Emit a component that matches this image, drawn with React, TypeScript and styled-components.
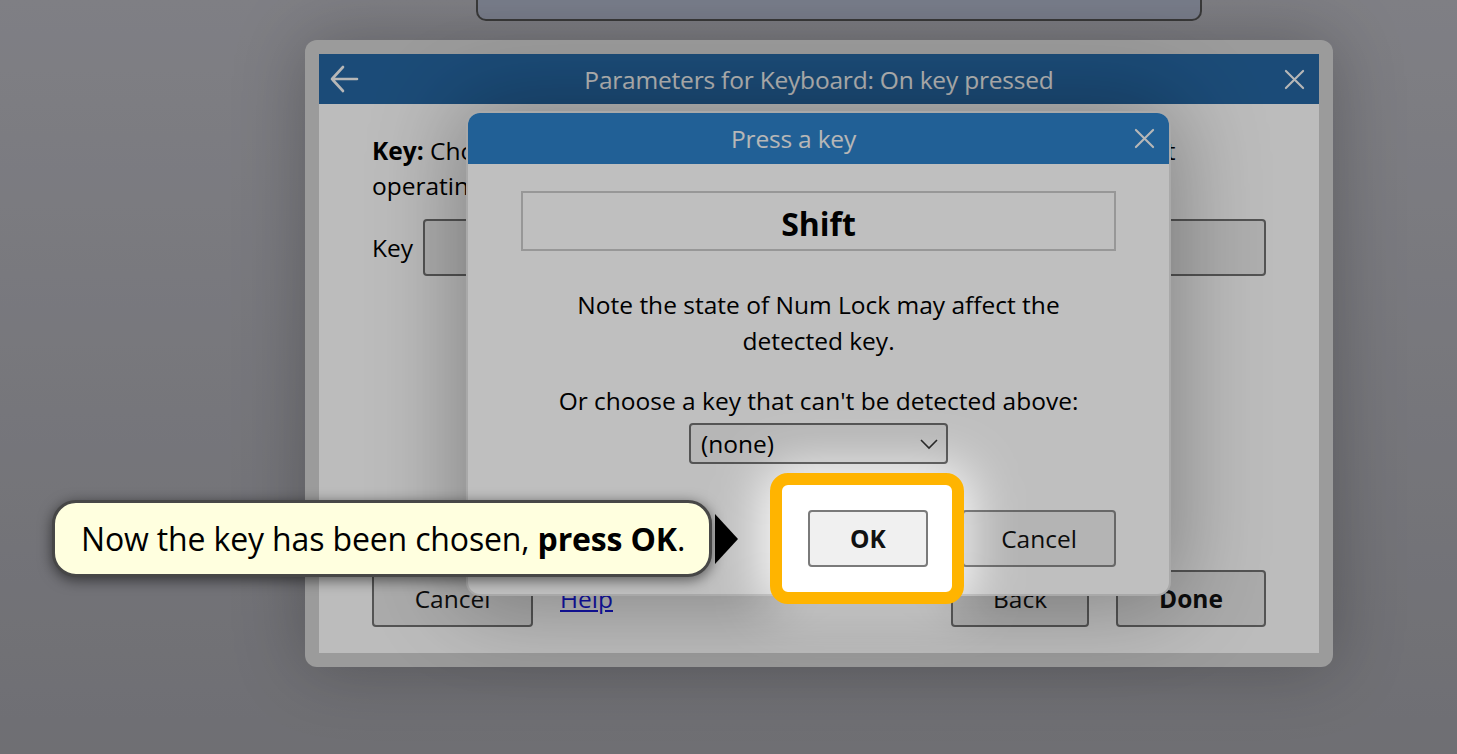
import styled, { createGlobalStyle } from "styled-components";

const GlobalStyle = createGlobalStyle`
  html, body {
    margin: 0;
    padding: 0;
  }
  body {
    font-family: "Open Sans", "Liberation Sans", sans-serif;
    color: #000;
    overflow: hidden;
  }
`;

const Page = styled.div`
  position: relative;
  width: 1457px;
  height: 754px;
  overflow: hidden;
  background: linear-gradient(180deg, #aaaab1 0%, #94949a 100%);
`;

const TopPanel = styled.div`
  margin-left: 476px;
  width: 722px;
  height: 19px;
  background: #a3a9bb;
  border: 2px solid #4e4e4e;
  border-top: none;
  border-radius: 0 0 10px 10px;
`;

// outer "Parameters" modal
const OuterDialog = styled.div`
  position: absolute;
  left: 305px;
  top: 40px;
  width: 1028px;
  height: 627px;
  box-sizing: border-box;
  padding: 14px;
  display: flex;
  flex-direction: column;
  background: #cfcfcf;
  border-radius: 12px;
  box-shadow: 0 0 70px rgba(0, 0, 0, 0.25);
`;

const Header = styled.div<{ $tone: string; $h: number }>`
  display: flex;
  align-items: center;
  height: ${(p) => p.$h}px;
  flex-shrink: 0;
  background: ${(p) => p.$tone};
  color: #f4f4f4;
`;

const HeaderTitle = styled.div`
  flex: 1;
  text-align: center;
  font-size: 24.5px;
  letter-spacing: -0.2px;
`;

const IconButton = styled.div`
  width: 50px;
  height: 100%;
  display: flex;
  align-items: center;
  justify-content: center;
`;

const OuterBody = styled.div`
  flex: 1;
  display: flex;
  flex-direction: column;
  padding: 29px 53px 26px;
  background: #fbfbfb;
  font-size: 24.5px;
`;

const Para = styled.p`
  margin: 0;
  line-height: 35px;
  white-space: nowrap;
`;

const KeyRow = styled.div`
  display: flex;
  align-items: center;
  gap: 10px;
  margin-top: 16px;
`;

const TextBox = styled.div`
  flex: 1;
  height: 57px;
  box-sizing: border-box;
  border: 2px solid #707070;
  border-radius: 4px;
  background: #e9e9e9;
`;

const Footer = styled.div`
  margin-top: auto;
  display: flex;
  align-items: center;
  justify-content: space-between;
`;

const Group = styled.div`
  display: flex;
  align-items: center;
  gap: 27px;
`;

const Button = styled.div<{ $w: number; $bold?: boolean; $light?: boolean }>`
  width: ${(p) => p.$w}px;
  height: 57px;
  box-sizing: border-box;
  display: flex;
  align-items: center;
  justify-content: center;
  border: 2px solid ${(p) => (p.$light ? "#8a8a8a" : "#707070")};
  border-radius: 4px;
  background: ${(p) => (p.$light ? "#f0f0f0" : "#e4e4e4")};
  font-size: 24.5px;
  font-weight: ${(p) => (p.$bold ? 700 : 400)};
  color: #111;
`;

const HelpLink = styled.a`
  color: #1a1adb;
  text-decoration: underline;
  font-size: 24.5px;
`;

// inner "Press a key" modal
const InnerDialog = styled.div`
  position: absolute;
  left: 468px;
  top: 113px;
  width: 701px;
  height: 481px;
  display: flex;
  flex-direction: column;
  border-radius: 12px;
  background: #ffffff;
  box-shadow: 0 0 0 2px #e2e2e2, 0 0 90px 10px rgba(0, 0, 0, 0.3);
`;

const InnerHeader = styled(Header)`
  border-radius: 12px 12px 0 0;
`;

const InnerBody = styled.div`
  flex: 1;
  display: flex;
  flex-direction: column;
  align-items: center;
  padding: 27px 53px 27px;
  font-size: 24.5px;
  text-align: center;
`;

const KeyDisplay = styled.div`
  align-self: stretch;
  height: 60px;
  box-sizing: border-box;
  display: flex;
  align-items: center;
  justify-content: center;
  padding-top: 4px;
  border: 2px solid #cacaca;
  font-size: 32px;
  font-weight: 700;
`;

const Note = styled.p<{ $mt: number }>`
  margin: ${(p) => p.$mt}px 0 0;
  line-height: 36px;
  max-width: 545px;
`;

const SelectBox = styled.div`
  margin-top: 4px;
  width: 259px;
  height: 41px;
  box-sizing: border-box;
  display: flex;
  align-items: center;
  justify-content: space-between;
  padding: 0 8px 0 10px;
  border: 2px solid #707070;
  border-radius: 4px;
  background: #f3f3f3;
  font-size: 24.5px;
`;

const ButtonRow = styled.div`
  margin-top: auto;
  align-self: stretch;
  display: flex;
  justify-content: flex-end;
  gap: 34px;
`;

const Spot = styled.div`
  position: relative;
`;

const Ring = styled.div`
  position: absolute;
  top: -37px;
  left: -38px;
  right: -36px;
  bottom: -37px;
  z-index: 11;
  border: 12px solid #ffb400;
  border-radius: 18px;
  background: #ffffff;
`;

const OkButton = styled(Button)`
  position: relative;
  z-index: 12;
  border-color: #7a7a7a;
`;

// dim layer with a soft rounded hole around the highlighted button
const Dim = styled.div`
  position: absolute;
  left: 764px;
  top: 467px;
  width: 206px;
  height: 143px;
  z-index: 10;
  pointer-events: none;
  border-radius: 26px;
  box-shadow: 0 0 0 3000px rgba(0, 0, 0, 0.25);
  filter: blur(26px);
`;

const Callout = styled.div`
  position: absolute;
  left: 52px;
  top: 500px;
  z-index: 13;
  display: flex;
  align-items: center;
  gap: 3px;
`;

const Bubble = styled.div`
  width: 660px;
  height: 77px;
  box-sizing: border-box;
  display: flex;
  align-items: center;
  padding-left: 26px;
  background: #ffffdf;
  border: 3px solid #474747;
  border-radius: 24px;
  box-shadow: 0 3px 14px rgba(0, 0, 0, 0.55);
  font-size: 32px;
  letter-spacing: -0.15px;
  white-space: nowrap;
`;

const Pointer = styled.div`
  width: 0;
  height: 0;
  border-top: 25px solid transparent;
  border-bottom: 25px solid transparent;
  border-left: 23px solid #000;
`;

const BackArrow = () => (
  <svg width="30" height="28" viewBox="0 0 30 28" fill="none" stroke="currentColor" strokeWidth="2.6" strokeLinecap="round" strokeLinejoin="round">
    <path d="M28 14H3M14 2L3 14l11 12" />
  </svg>
);

const CloseX = ({ size }: { size: number }) => (
  <svg width={size} height={size} viewBox="0 0 22 22" fill="none" stroke="currentColor" strokeWidth="2.2" strokeLinecap="round">
    <path d="M2 2l18 18M20 2L2 20" />
  </svg>
);

const Chevron = () => (
  <svg width="18" height="12" viewBox="0 0 18 12" fill="none" stroke="#333" strokeWidth="1.6">
    <path d="M1 2l8 8 8-8" />
  </svg>
);

export default function App() {
  return (
    <>
      <GlobalStyle />
      <Page>
        <TopPanel />

        <OuterDialog>
          <Header $tone="#2565a0" $h={50}>
            <IconButton>
              <BackArrow />
            </IconButton>
            <HeaderTitle>Parameters for Keyboard: On key pressed</HeaderTitle>
            <IconButton>
              <CloseX size={21} />
            </IconButton>
          </Header>
          <OuterBody>
            <Para>
              <b>Key:</b> Choose the key to detect. Some keys may be taken by the current
              <br />
              operating system.
            </Para>
            <KeyRow>
              <span>Key</span>
              <TextBox />
            </KeyRow>
            <Footer>
              <Group>
                <Button $w={161}>Cancel</Button>
                <HelpLink href="#">Help</HelpLink>
              </Group>
              <Group>
                <Button $w={138}>Back</Button>
                <Button $w={150} $bold>
                  Done
                </Button>
              </Group>
            </Footer>
          </OuterBody>
        </OuterDialog>

        <InnerDialog>
          <InnerHeader $tone="#2c80c8" $h={51}>
            <HeaderTitle>Press a key</HeaderTitle>
            <IconButton>
              <CloseX size={21} />
            </IconButton>
          </InnerHeader>
          <InnerBody>
            <KeyDisplay>Shift</KeyDisplay>
            <Note $mt={36}>Note the state of Num Lock may affect the detected key.</Note>
            <Note $mt={24}>Or choose a key that can't be detected above:</Note>
            <SelectBox>
              <span>(none)</span>
              <Chevron />
            </SelectBox>
            <ButtonRow>
              <Spot>
                <Ring />
                <OkButton $w={120} $bold $light>
                  OK
                </OkButton>
              </Spot>
              <Button $w={154} $light>
                Cancel
              </Button>
            </ButtonRow>
          </InnerBody>
        </InnerDialog>

        <Dim />

        <Callout>
          <Bubble>
            Now the key has been chosen,&nbsp;<b>press OK</b>.
          </Bubble>
          <Pointer />
        </Callout>
      </Page>
    </>
  );
}
